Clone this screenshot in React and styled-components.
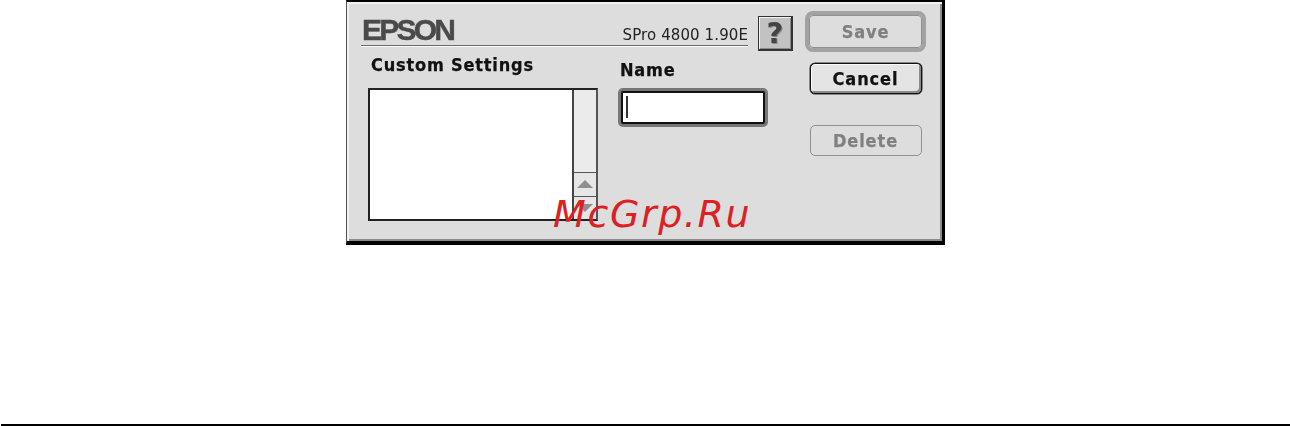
import React from 'react'
import styled, { createGlobalStyle } from 'styled-components'

const GlobalStyle = createGlobalStyle`
  html, body {
    margin: 0;
    padding: 0;
    background: #fff;
  }
`

const Page = styled.div`
  position: relative;
  width: 1291px;
  height: 426px;
  overflow: hidden;
  display: flex;
  flex-direction: column;
  justify-content: space-between;
  font-family: "DejaVu Sans", sans-serif;
  color: #111;
`

const Dialog = styled.div`
  box-sizing: border-box;
  margin-left: 346px;
  width: 599px;
  height: 245px;
  padding: 9px 16px 0 14px;
  display: flex;
  justify-content: space-between;
  background: #dddddd;
  border: solid #000;
  border-width: 2px 3px 4px 1px;
  border-left-color: #555;
  box-shadow: inset 2px 2px 0 #f1f1f1, inset -2px -2px 0 #8c8c8c;
  filter: blur(0.35px);
`

const MainColumn = styled.div`
  width: 432px;
  display: flex;
  flex-direction: column;
`

const TopRow = styled.div`
  display: flex;
  gap: 10px;
  align-items: flex-start;
  margin-top: 5px;
`

const Header = styled.div`
  box-sizing: border-box;
  width: 387px;
  height: 30px;
  display: flex;
  align-items: flex-end;
  justify-content: space-between;
  border-bottom: 1px solid #6a6a6a;
  box-shadow: 0 1px 0 #fafafa;
`

const Logo = styled.span`
  font-family: "Liberation Sans", sans-serif;
  font-weight: 700;
  font-size: 30px;
  line-height: 30px;
  letter-spacing: -2.8px;
  margin-left: 1px;
  color: #4a4a4a;
  -webkit-text-stroke: 0.4px #4a4a4a;
`

const Version = styled.span`
  font-size: 15px;
  line-height: 16px;
  margin-bottom: 2px;
  letter-spacing: 0.1px;
  color: #222;
`

const HelpButton = styled.div`
  box-sizing: border-box;
  width: 35px;
  height: 35px;
  flex: none;
  display: flex;
  align-items: center;
  justify-content: center;
  background: #c2c2c2;
  border: 1px solid #333;
  border-right-width: 2px;
  border-bottom-width: 2px;
  box-shadow: inset 1px 1px 0 #f4f4f4, inset -1px -1px 0 #8a8a8a;
  font-family: "DejaVu Sans", sans-serif;
  font-weight: 700;
  font-size: 29px;
  color: #444;
  text-shadow: 1px 1px 0 #888;
`

const Panels = styled.div`
  display: flex;
  margin-top: 4px;
`

const SettingsPanel = styled.div`
  width: 257px;
  display: flex;
  flex-direction: column;
`

const NamePanel = styled.div`
  display: flex;
  flex-direction: column;
  align-items: flex-start;
`

const Label = styled.label`
  font-weight: 700;
  font-size: 18px;
  font-stretch: condensed;
  line-height: 20px;
  margin-left: ${(p) => p.$indent}px;
  margin-top: ${(p) => p.$top}px;
  letter-spacing: 0.8px;
  color: #111;
  -webkit-text-stroke: 0.25px #111;
`

const ListBox = styled.div`
  box-sizing: border-box;
  width: 230px;
  height: 133px;
  margin-left: 7px;
  margin-top: 13px;
  display: flex;
  background: #fff;
  border: 2px solid #222;
  border-right-color: #555;
`

const ListArea = styled.div`
  flex: 1;
  border-right: 2px solid #444;
`

const ScrollBar = styled.div`
  width: 22px;
  display: flex;
  flex-direction: column;
  background: #ebebeb;
`

const ScrollTrack = styled.div`
  flex: 1;
`

const ScrollArrow = styled.div`
  box-sizing: border-box;
  height: 23.5px;
  flex: none;
  display: flex;
  align-items: center;
  justify-content: center;
  background: #e6e6e6;
  border-top: 1px solid #555;
`

const Triangle = styled.span`
  width: 0;
  height: 0;
  border-left: 8px solid transparent;
  border-right: 8px solid transparent;
  ${(p) => (p.$down ? 'border-top' : 'border-bottom')}: 8px solid #8f8f8f;
`

const NameInput = styled.div`
  box-sizing: border-box;
  width: 144px;
  height: 33px;
  margin: 11px 0 0 3px;
  padding: 3px 0 0 3px;
  background: #fff;
  border: 2px solid #111;
  box-shadow: 0 0 0 3px #777;
  border-radius: 2px;
`

const Caret = styled.div`
  width: 2px;
  height: 22px;
  background: #333;
`

const ActionColumn = styled.div`
  width: 121px;
  display: flex;
  flex-direction: column;
  align-items: center;
`

const Button = styled.div`
  box-sizing: border-box;
  width: 112px;
  height: 31px;
  display: flex;
  align-items: center;
  justify-content: center;
  font-weight: 700;
  font-size: 18px;
  font-stretch: condensed;
  letter-spacing: 0.9px;
  border-radius: 5px;
  margin-top: ${(p) => p.$top}px;
  border: 1px solid ${(p) => (p.$disabled ? '#909090' : '#111')};
  color: ${(p) => (p.$disabled ? '#808080' : '#111')};
  -webkit-text-stroke: 0.25px ${(p) => (p.$disabled ? '#808080' : '#111')};
  background: ${(p) => (p.$disabled ? '#dddddd' : '#e4e4e4')};
  box-shadow: ${(p) =>
    p.$disabled
      ? 'none'
      : 'inset 1px 1px 0 #fafafa, inset -2px -2px 0 #8a8a8a, 0 0 0 0.5px #333'};
`

const DefaultRing = styled.div`
  box-sizing: border-box;
  width: 121px;
  height: 41px;
  display: flex;
  align-items: center;
  justify-content: center;
  border: 4px solid #a2a2a2;
  border-radius: 8px;

  ${Button} {
    width: 113px;
    height: 33px;
    border-radius: 4px;
  }
`

const Watermark = styled.div`
  position: absolute;
  left: 553px;
  top: 190px;
  font-family: "DejaVu Sans", sans-serif;
  font-style: oblique;
  font-size: 38px;
  line-height: 48px;
  letter-spacing: 1.6px;
  color: #dc2024;
`

const FooterRule = styled.div`
  height: 2px;
  margin: 0 1px;
  background: #000;
`

export default function App() {
  return (
    <Page>
      <GlobalStyle />
      <Dialog>
        <MainColumn>
          <TopRow>
            <Header>
              <Logo>EPSON</Logo>
              <Version>SPro 4800 1.90E</Version>
            </Header>
            <HelpButton>?</HelpButton>
          </TopRow>
          <Panels>
            <SettingsPanel>
              <Label $indent={10} $top={0}>Custom Settings</Label>
              <ListBox>
                <ListArea />
                <ScrollBar>
                  <ScrollTrack />
                  <ScrollArrow><Triangle /></ScrollArrow>
                  <ScrollArrow><Triangle $down /></ScrollArrow>
                </ScrollBar>
              </ListBox>
            </SettingsPanel>
            <NamePanel>
              <Label $indent={2} $top={5}>Name</Label>
              <NameInput><Caret /></NameInput>
            </NamePanel>
          </Panels>
        </MainColumn>
        <ActionColumn>
          <DefaultRing>
            <Button $disabled>Save</Button>
          </DefaultRing>
          <Button $top={11}>Cancel</Button>
          <Button $top={31} $disabled>Delete</Button>
        </ActionColumn>
      </Dialog>
      <Watermark>McGrp.Ru</Watermark>
      <FooterRule />
    </Page>
  )
}
